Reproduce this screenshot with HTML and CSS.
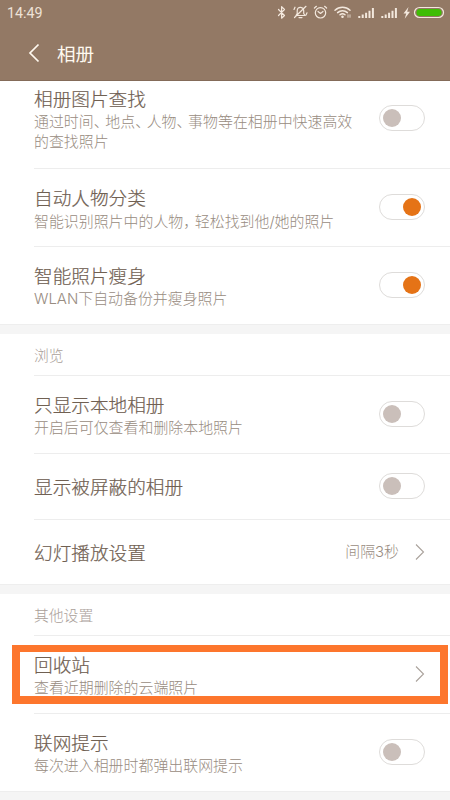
FILE: index.html
```html
<!DOCTYPE html>
<html lang="zh-CN">
<head>
<meta charset="utf-8">
<title>相册</title>
<link rel="stylesheet" href="styles.css">
</head>
<body>
<header class="top">
  <div class="status">
    <span class="time">14:49</span>
    <svg class="icons" width="174" height="20" viewBox="0 0 174 20" fill="none" stroke="#f3e8dd" stroke-width="1.2" stroke-linecap="round" stroke-linejoin="round">
      <path d="M1.5 9.5 7.5 15.5 4.6 18.2V6.7L7.5 9.5 1.5 15.5"/>
      <path d="M19 15.5h9l-1.3-2v-2.8c0-2-1.3-3.2-3-3.4-2.2-.2-3.5 1.4-3.5 3.5v2.7zM22 17.6h3M17.5 17.5 29 6.3M17 9.5l1-2.3M30 12.8l-1 2.3"/>
      <circle cx="43.5" cy="12.8" r="5.2"/><path d="m41 11.5 2.5 2 2.5-2M37.4 8l2-1.7M47.6 6.3l2 1.7"/>
      <path stroke-width="1.5" d="M58 10.2c4.2-4 10.8-4 15 0M60.6 12.6c2.8-2.6 7-2.6 9.8 0M63 14.8c1.4-1.2 3.6-1.2 5 0"/>
      <circle cx="65.5" cy="16.7" r=".7" fill="#f3e8dd"/><path stroke-width=".8" d="M71 14.8v2.5M73 14.8v2.5"/>
      <g stroke-width="2" stroke-linecap="butt"><path d="M82.3 18v-2M85.7 18v-3.4M89.1 18v-5.2M92.5 18v-7.3M95.9 18V8M105.3 18v-2M108.7 18v-3.4M112.1 18v-5.2M115.5 18v-7.3M118.9 18V8"/></g>
      <path fill="#f3e8dd" stroke="none" d="m131.500 7-5 6.500h2.700l-1.500 5.200 5.300-6.900h-2.800z"/>
      <rect x="137.500" y="7.500" width="29" height="10" rx="5"/><rect x="139.500" y="9" width="25" height="7" rx="3.500" fill="#3fbd05" stroke="none"/>
    </svg>
  </div>
  <div class="bar">
    <svg class="back" width="12" height="20" viewBox="0 0 12 20"><path d="M10.500 1.500 2 10l8.500 8.500" fill="none" stroke="#fff9f0" stroke-width="1.700"/></svg>
    <h1>相册</h1>
  </div>
</header>
<main>
  <section>
    <div class="row first"><div class="text"><h2>相册图片查找</h2><p>通过时间<i>、</i>地点<i>、</i>人物<i>、</i>事物等在相册中快速高效<br>的查找照片</p></div><span class="toggle"></span></div>
    <div class="row"><div class="text"><h2>自动人物分类</h2><p>智能识别照片中的人物<i>，</i>轻松找到他/她的照片</p></div><span class="toggle on"></span></div>
    <div class="row"><div class="text"><h2>智能照片瘦身</h2><p>WLAN下自动备份并瘦身照片</p></div><span class="toggle on"></span></div>
  </section>
  <section>
    <h3>浏览</h3>
    <div class="row"><div class="text"><h2>只显示本地相册</h2><p>开启后可仅查看和删除本地照片</p></div><span class="toggle"></span></div>
    <div class="row single"><div class="text"><h2>显示被屏蔽的相册</h2></div><span class="toggle"></span></div>
    <div class="row single"><div class="text"><h2>幻灯播放设置</h2></div><span class="value">间隔3秒</span><svg class="next" width="10" height="18" viewBox="0 0 10 18"><path d="m1 1.500 7.500 7.500L1 16.500"/></svg></div>
  </section>
  <section>
    <h3>其他设置</h3>
    <div class="row marked"><div class="text"><h2>回收站</h2><p>查看近期删除的云端照片</p></div><svg class="next" width="10" height="18" viewBox="0 0 10 18"><path d="m1 1.500 7.500 7.500L1 16.500"/></svg></div>
    <div class="row"><div class="text"><h2>联网提示</h2><p>每次进入相册时都弹出联网提示</p></div><span class="toggle"></span></div>
  </section>
</main>
</body>
</html>
```
FILE: styles.css
```css
*, *::before, *::after { box-sizing: border-box; }
body {
  margin: 0;
  height: 800px;
  overflow: hidden;
  display: flex;
  flex-direction: column;
  background: #f5f5f5;
  font-family: "Noto Sans CJK SC", sans-serif;
  font-weight: 300;
}
h1, h2, h3, p { margin: 0; font-weight: 300; white-space: nowrap; }
.top { flex: none; height: 81px; background: #937965; border-bottom: 1px solid #846b59; }
.status { height: 26px; display: flex; justify-content: space-between; padding-left: 7px; }
.time { font: 14.3px/27px Roboto, sans-serif; color: #eee2d7; }
.icons { flex: none; margin-right: -1px; }
.bar { height: 54px; display: flex; align-items: center; padding-left: 28px; }
h1 { margin-left: 17px; font-size: 18.6px; line-height: 26px; font-weight: 400; color: #fff9f0; }
main { flex: 1; min-height: 0; overflow: hidden; }
section { background: #fff; padding-left: 34px; margin-bottom: 9px; border-bottom: 1px solid #eee; }
h3 { height: 42px; line-height: 41px; font-size: 14.8px; color: #aaa099; border-bottom: 1px solid #ededed; }
.row { height: 78px; display: flex; align-items: center; justify-content: space-between; padding-right: 25px; border-bottom: 1px solid #ededed; }
.row:last-child { height: 77px; border-bottom: 0; }
.first { height: 100px; margin-top: -12px; }
.single { height: 66px; }
.row.single:last-child { height: 64px; }
h2 { margin-bottom: 2px; font-size: 18.65px; line-height: 25px; color: #706052; -webkit-text-stroke: 0.2px #706052; }
.first h2 { margin-bottom: 1px; }
p { font-size: 14.93px; line-height: 20px; color: #988c81; }
p, .value { font-family: Inter, "Noto Sans CJK SC", sans-serif; }
i { font-style: normal; font-family: "Noto Sans CJK SC", sans-serif; font-feature-settings: "halt"; margin-right: 4.1px; }
.text { flex: 1; min-width: 0; }
.value { margin-right: 16px; font-size: 14.9px; line-height: 20px; color: #988c81; }
.toggle { flex: none; width: 46px; height: 26px; margin-bottom: 2px; padding: 3px; display: flex; border: 1px solid #dedcda; border-radius: 13px; }
.first .toggle { margin-bottom: 1px; }
.toggle::before { content: ""; width: 18px; height: 18px; border-radius: 50%; background: #cabfba; }
.on { justify-content: flex-end; }
.on::before { background: #e57316; }
.next { flex: none; margin-bottom: 1px; fill: none; stroke: #aaa29c; stroke-width: 1.1; }
.marked { position: relative; }
.marked::after {
  content: "";
  position: absolute;
  left: -22px;
  right: 2px;
  top: 9px;
  height: 59px;
  border: 8px solid #fd762d;
  border-top-width: 7px;
}
```
